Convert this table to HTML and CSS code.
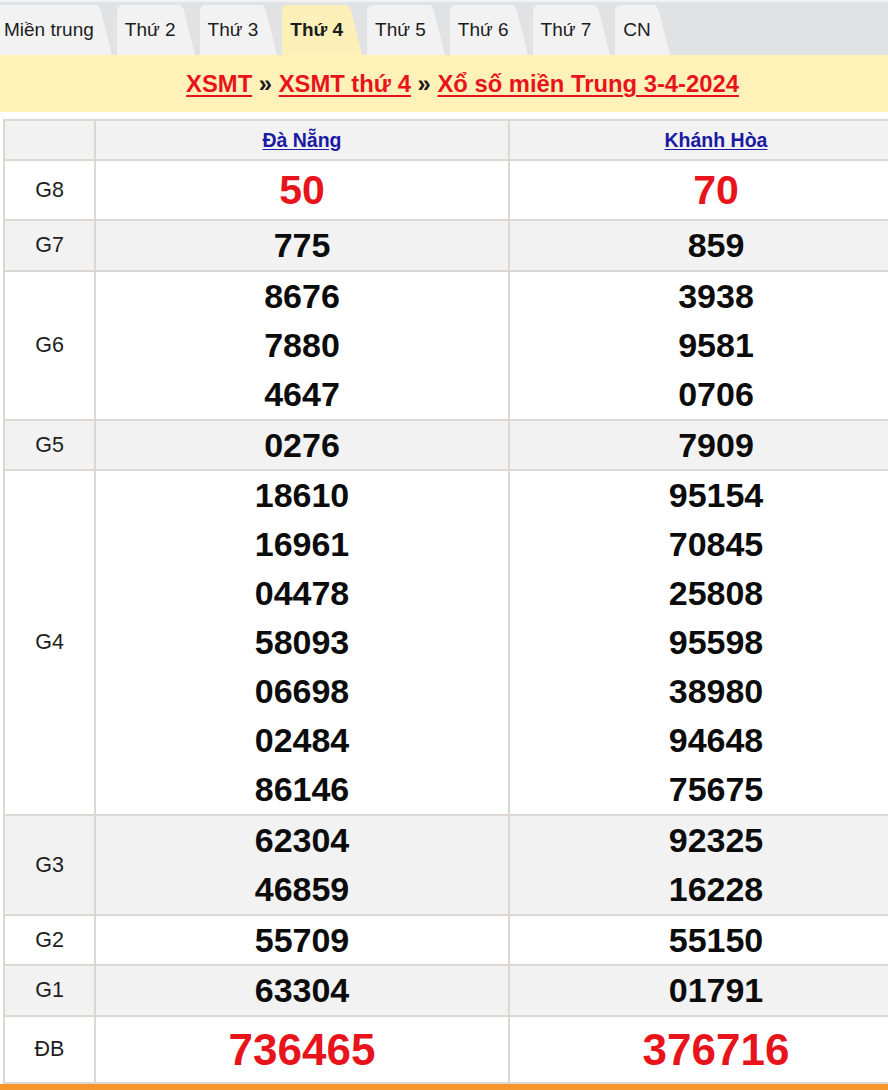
FILE: index.html
```html
<!DOCTYPE html>
<html lang="vi">
<head>
<meta charset="utf-8">
<title>XSMT thứ 4</title>
<link rel="stylesheet" href="styles.css">
</head>
<body>
<div class="page">
  <nav class="tabs">
    <a class="tab first">Miền trung</a>
    <a class="tab">Thứ 2</a>
    <a class="tab">Thứ 3</a>
    <a class="tab active">Thứ 4</a>
    <a class="tab">Thứ 5</a>
    <a class="tab">Thứ 6</a>
    <a class="tab">Thứ 7</a>
    <a class="tab">CN</a>
  </nav>
  <div class="wrap">
    <h2 class="title"><a>XSMT</a> » <a>XSMT thứ 4</a> » <a>Xổ số miền Trung 3-4-2024</a></h2>
    <table class="results">
      <colgroup><col class="c-label"><col><col></colgroup>
      <tr class="head gray">
        <th></th>
        <th><a>Đà Nẵng</a></th>
        <th><a>Khánh Hòa</a></th>
      </tr>
      <tr class="g8">
        <td class="lbl">G8</td>
        <td><div class="n">50</div></td>
        <td><div class="n">70</div></td>
      </tr>
      <tr class="gray">
        <td class="lbl">G7</td>
        <td><div class="n">775</div></td>
        <td><div class="n">859</div></td>
      </tr>
      <tr>
        <td class="lbl">G6</td>
        <td><div class="n">8676</div><div class="n">7880</div><div class="n">4647</div></td>
        <td><div class="n">3938</div><div class="n">9581</div><div class="n">0706</div></td>
      </tr>
      <tr class="gray short">
        <td class="lbl">G5</td>
        <td><div class="n">0276</div></td>
        <td><div class="n">7909</div></td>
      </tr>
      <tr>
        <td class="lbl">G4</td>
        <td><div class="n">18610</div><div class="n">16961</div><div class="n">04478</div><div class="n">58093</div><div class="n">06698</div><div class="n">02484</div><div class="n">86146</div></td>
        <td><div class="n">95154</div><div class="n">70845</div><div class="n">25808</div><div class="n">95598</div><div class="n">38980</div><div class="n">94648</div><div class="n">75675</div></td>
      </tr>
      <tr class="gray">
        <td class="lbl">G3</td>
        <td><div class="n">62304</div><div class="n">46859</div></td>
        <td><div class="n">92325</div><div class="n">16228</div></td>
      </tr>
      <tr class="short">
        <td class="lbl">G2</td>
        <td><div class="n">55709</div></td>
        <td><div class="n">55150</div></td>
      </tr>
      <tr class="gray">
        <td class="lbl">G1</td>
        <td><div class="n">63304</div></td>
        <td><div class="n">01791</div></td>
      </tr>
      <tr class="db">
        <td class="lbl">ĐB</td>
        <td><div class="n">736465</div></td>
        <td><div class="n">376716</div></td>
      </tr>
    </table>
    <div class="footer-bar"></div>
  </div>
</div>
</body>
</html>
```

FILE: styles.css
```css
html, body {
  margin: 0;
  padding: 0;
  overflow: hidden;
  background: #ffffff;
}

body {
  font-family: "Liberation Sans", Arial, sans-serif;
  color: #222;
}

.page {
  width: 925px;
}

.tabs {
  display: flex;
  align-items: flex-end;
  height: 53px;
  border-top: 2px solid #f2f2f3;
  background: #e1e2e4;
  width: 888px;
  overflow: hidden;
}

.tab {
  position: relative;
  z-index: 0;
  flex: 0 0 auto;
  display: block;
  height: 50px;
  line-height: 50px;
  padding: 0 5px 0 8px;
  margin-right: 19px;
  font-size: 19px;
  color: #1c1c1c;
  background: #f2f2f3;
  border-radius: 6px 0 0 0;
  white-space: nowrap;
}

.tab::after {
  content: "";
  position: absolute;
  top: 0;
  bottom: 0;
  right: -14px;
  width: 28px;
  background: inherit;
  border-radius: 0 6px 0 0;
  transform: skewX(14deg);
  transform-origin: bottom left;
  z-index: -1;
}

.tab.first {
  margin-left: -4px;
  padding-right: 4px;
  border-radius: 0;
}

.tab.active {
  background: #fdefb8;
  font-weight: bold;
}

.wrap {
  width: 925px;
}

.title {
  margin: 0;
  height: 57px;
  line-height: 57px;
  background: #fff1b8;
  text-align: center;
  font-size: 23.8px;
  font-weight: bold;
  color: #1a1a1a;
}

.title a {
  color: #e8141c;
  text-decoration: underline;
  text-decoration-thickness: 2px;
  text-underline-offset: 3px;
}

.results {
  border-collapse: collapse;
  margin: 7px 0 0 3px;
  width: 921px;
  table-layout: fixed;
}

.results col.c-label {
  width: 91px;
}

.results th,
.results td {
  border: 2px solid #ddd7d1;
  padding: 0;
  text-align: center;
  vertical-align: middle;
}

.results tr.gray {
  background: #f2f2f2;
}

.results .head th {
  height: 38px;
  font-size: 19.5px;
  font-weight: bold;
}

.results .head a {
  color: #1a1aa3;
  text-decoration: underline;
  text-underline-offset: 2px;
}

.lbl {
  font-size: 21.5px;
  color: #1e1e1e;
}

.n {
  font-size: 34px;
  font-weight: bold;
  line-height: 49px;
  color: #0c0c0c;
}

.short .n {
  line-height: 48px;
}

.g8 .n {
  font-size: 41px;
  line-height: 58px;
  color: #e8141c;
}

.db .n {
  font-size: 44px;
  line-height: 65px;
  color: #e8141c;
}

.footer-bar {
  height: 12px;
  background: #f7962b;
}
```
